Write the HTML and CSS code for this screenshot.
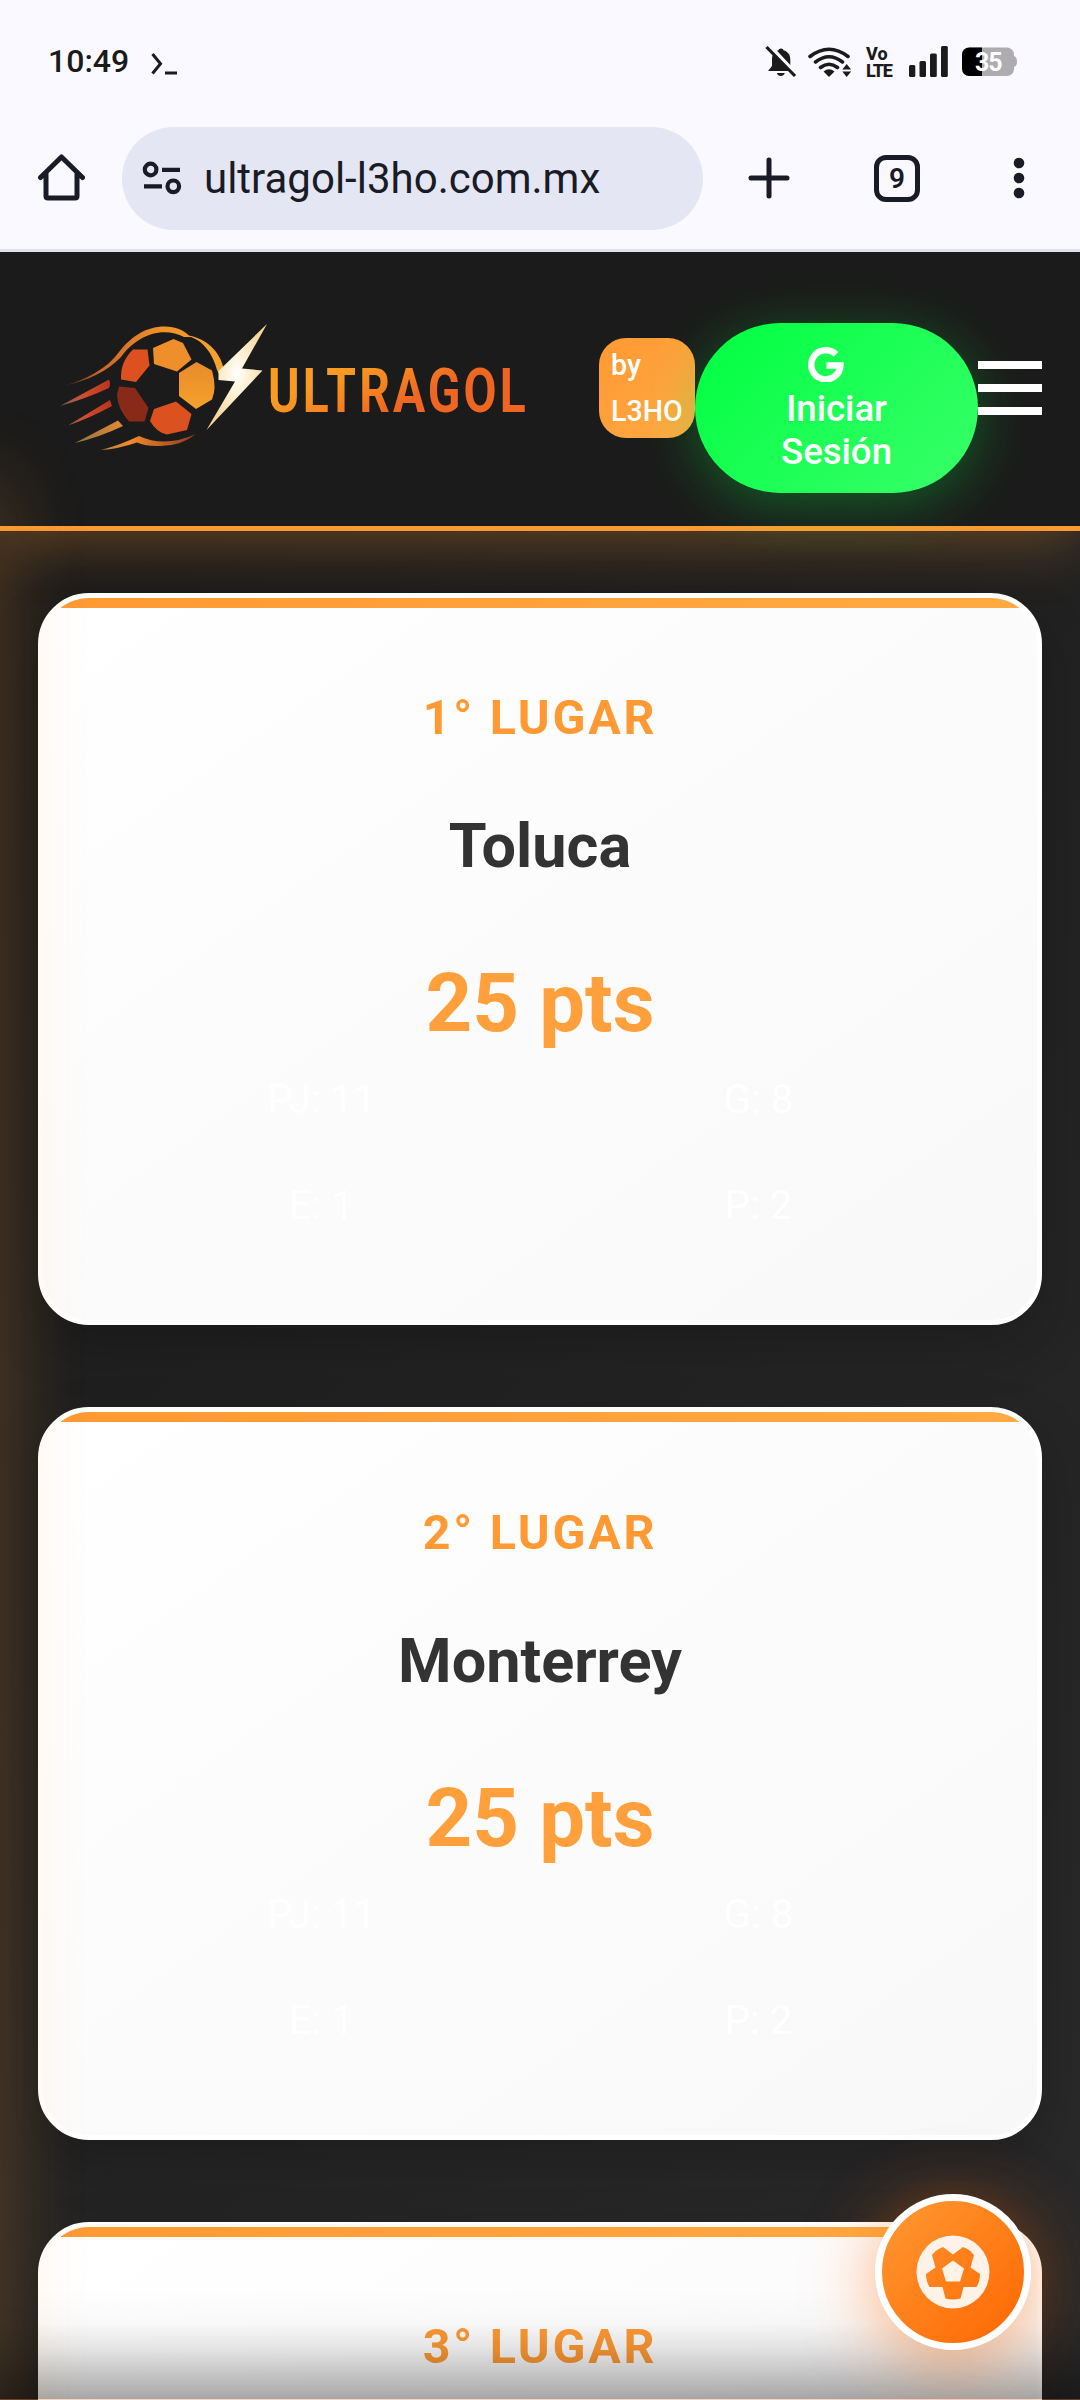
FILE: index.html
```html
<!DOCTYPE html>
<html lang="es">
<head>
<meta charset="utf-8">
<title>ULTRAGOL</title>
<link rel="stylesheet" href="styles.css">
</head>
<body>
<div class="screen">
  <div class="statusbar">
    <span class="clock">10:49</span>
    <svg class="prompt" width="26" height="22" viewBox="0 0 26 22" fill="none" stroke="#1b1b1b" stroke-width="3"><path d="M1.500 1 L9.500 10.700 L1.500 20.500 M14 20 H26"/></svg>
    <svg class="status-icons" width="254" height="38" viewBox="764 42 254 38">
      <g fill="#1b1b1b">
        <path d="M781 48.500c1.500 0 2.300.8 2.500 1.800 4.300 1.100 6.800 4.700 6.800 9.200v6.500l4 5H768l4-5v-6.500c0-4.500 2.300-8.100 6.500-9.200.2-1 1-1.800 2.500-1.800zM776.800 73h8c-.7 2-2 3-4 3s-3.300-1-4-3z"/>
        <path d="M769 45 797 75" stroke="#f9f9ff" stroke-width="4"/>
        <path d="M766.500 47 795 76" stroke="#1b1b1b" stroke-width="3.200"/>
        <path d="M829 77l-5.500-5.500q5.500-4.500 11 0z"/>
        <path d="M846.700 64l4.400 5.500h-8.800zM846.700 77l4.400-5.500h-8.800z"/>
        <rect x="909" y="65" width="6.300" height="12" rx="1.500"/><rect x="919.500" y="61" width="6.500" height="16" rx="1.500"/><rect x="930" y="53.500" width="6.800" height="23.500" rx="1.500"/><rect x="941" y="46" width="6.800" height="31" rx="1.500"/>
      </g>
      <g fill="none" stroke="#1b1b1b" stroke-width="3.600" stroke-linecap="round">
        <path d="M810 56.500q19-14.500 38 0M815.500 62q13.500-10.500 27 0M820.500 67.500q8.500-6.500 17 0"/>
      </g>
      <text class="volte" x="866" y="60">Vo</text>
      <text class="volte lte" x="866" y="77">LTE</text>
      <path d="M969 47.500h38a7 7 0 0 1 7 7v1.500q3 1 3 5.500t-3 5.500v2a7 7 0 0 1-7 7h-38z" fill="#aeacb1"/>
      <path d="M982 47.500h-13a7 7 0 0 0-7 7v14.500a7 7 0 0 0 7 7h13z" fill="#000"/>
      <text class="battery" x="975" y="71">35</text>
    </svg>
  </div>

  <div class="toolbar">
    <svg class="home" width="48" height="50" viewBox="37 154 48 50" fill="none" stroke="#191b26" stroke-width="5" stroke-linecap="round" stroke-linejoin="round"><path d="M40.500 178.500 61.500 158 82.500 178.500M46 174v23q0 2 2 2h27q2 0 2-2v-23"/></svg>
    <div class="urlbar">
      <svg width="40" height="34" viewBox="0 0 40 34" fill="none" stroke="#191b26" stroke-width="4.200"><circle cx="8.600" cy="8.500" r="5.800"/><path d="M20 8.800h18M2 25.300h18"/><circle cx="31.300" cy="25.300" r="5.800"/></svg>
      <span class="url">ultragol-l3ho.com.mx</span>
    </div>
    <svg class="plus" width="42" height="42" viewBox="0 0 42 42" stroke="#191b26" stroke-width="5" stroke-linecap="round"><path d="M21 3v36M3 21h36"/></svg>
    <span class="tabs">9</span>
    <svg class="dots" width="12" height="42" viewBox="0 0 12 42" fill="#191b26"><circle cx="6" cy="6" r="5.300"/><circle cx="6" cy="21" r="5.300"/><circle cx="6" cy="36" r="5.300"/></svg>
  </div>

  <div class="page">
    <header class="header">
      <svg class="logo" width="470" height="136" viewBox="60 320 470 136">
        <defs>
          <linearGradient id="swoosh" x1="0" x2="1"><stop offset="0" stop-color="#b5502a" stop-opacity=".4"/><stop offset=".2" stop-color="#c9622a"/><stop offset=".6" stop-color="#f0902a"/><stop offset="1" stop-color="#f4a52e"/></linearGradient>
          <linearGradient id="tail" x1="0" x2="1"><stop offset="0" stop-color="#e0a85a" stop-opacity=".6"/><stop offset=".45" stop-color="#f28a2a"/><stop offset="1" stop-color="#8f3a1c"/></linearGradient>
          <linearGradient id="word" gradientUnits="userSpaceOnUse" x1="120" y1="-50" x2="140" y2="5"><stop offset="0" stop-color="#f79b22"/><stop offset=".5" stop-color="#f58520"/><stop offset="1" stop-color="#ef6522"/></linearGradient>
          <radialGradient id="bolt" cx=".5" cy=".47" r=".5"><stop offset="0" stop-color="#fff"/><stop offset=".4" stop-color="#fdf1d4"/><stop offset="1" stop-color="#f5d8a0"/></radialGradient>
          <linearGradient id="streak" x1="0" x2="1"><stop offset="0" stop-color="#e6907a" stop-opacity=".5"/><stop offset=".5" stop-color="#d44a28"/><stop offset="1" stop-color="#b53420"/></linearGradient>
          <linearGradient id="panel" x1="0" y1="0" x2="0" y2="1"><stop offset="0" stop-color="#e98a2b"/><stop offset="1" stop-color="#f5a22c"/></linearGradient>
        </defs>
        <path fill="url(#swoosh)" d="M65 385.500C85 380 107 369 119 352C131 337 145 326.500 165 326.500C176 326.500 183 330 189 335.500C207 339 220 352 223.500 368L221 378L217 370C213 354 203 341 191 337L184 337C175 332 163 331 152 334C139 338 129 346 121 357C108 371 87 381 65 385.500Z"/>
        <path fill="url(#streak)" d="M60 406 109 379.500Q111 384 109 388Q85 399 60 406ZM68 425.500 110 400 112 406Q90 418 68 425.500Z"/>
        <path fill="url(#tail)" d="M75 443 118 420.500 123 426Q100 437 75 443ZM101 450Q120 445 139 436Q165 448 196 434Q180 447 157 446Q145 446 137 442.500Q118 449 101 450Z"/>
        <path fill="#dd5120" d="M133 349.500H147.500L149.500 365.500 136 382 121 379.500Q120 362 133 349.500Z"/>
        <path fill="#ef8f2b" d="M153 348 173.500 339 183 343 191.500 359.500 177 371.500 154 364Z"/>
        <path fill="url(#panel)" d="M196.500 362 212 370.500Q217 388 212 399.500L196 409 179 396V373Z"/>
        <path fill="#892a19" d="M119 386.500 135 388 148.500 408 144.500 421.500H129Q117 408 117 394Z"/>
        <path fill="#db5120" d="M154 409 176 401.500 191.500 414 187 430 167 434.500Q157 433 150 421Z"/>
        <path fill="url(#bolt)" d="M267 324 242 368.500 262.500 370.500 206.500 430 235 381.500 218.500 380 218.500 371Z"/>
        <text class="wordmark" transform="translate(268 411.500) scale(.773 1)" fill="url(#word)">ULTRAGOL</text>
      </svg>
      <div class="badge">by<br>L3HO</div>
      <button class="login">
        <svg width="36" height="36" viewBox="0 0 36 36"><path d="M28 8.300A14.600 14.600 0 1 0 32.400 19.500H18.500" fill="none" stroke="#fff" stroke-width="6.500"/></svg>
        <span>Iniciar<br>Sesión</span>
      </button>
      <div class="burger"><i></i><i></i><i></i></div>
    </header>
    <main class="cards">
      <section class="card"><h3>1° LUGAR</h3><h2>Toluca</h2><p class="pts">25 pts</p>
        <div class="stats"><span>PJ: 11</span><span>G: 8</span><span>E: 1</span><span>P: 2</span></div></section>
      <section class="card"><h3>2° LUGAR</h3><h2>Monterrey</h2><p class="pts">25 pts</p>
        <div class="stats"><span>PJ: 11</span><span>G: 8</span><span>E: 1</span><span>P: 2</span></div></section>
      <section class="card"><h3>3° LUGAR</h3></section>
    </main>
    <div class="edge-glow"></div>
    <div class="bottom-fade"></div>
    <div class="fab"><svg width="74" height="74" viewBox="0 0 74 74"><path fill="#fff" fill-opacity=".9" fill-rule="evenodd" d="M37 .500a36.500 36.500 0 1 1 0 73a36.500 36.500 0 0 1 0-73ZM37 19.500 27 12Q20 14.500 16 20L19.500 32.500 10 39Q10 46 13.500 52H26.500L29.500 63.500Q37 65.500 44.500 63.500L47.500 52H60.500Q64 46 64 39L54.500 32.500 58 20Q54 14.500 47 12ZM37 25.500 48 33.500 44 46.500H30L26 33.500Z"/></svg></div>
  </div>
</div>
</body>
</html>
```
FILE: styles.css
```css
* { box-sizing: border-box; }
body { margin: 0; font-family: Roboto, sans-serif; }
h2, h3, p { margin: 0; }
.screen { width: 1080px; height: 2400px; overflow: hidden; display: flex; flex-direction: column; background: #f9f9ff; }

.statusbar { height: 122px; flex: none; display: flex; align-items: center; padding: 0 62px 0 48px; }
.clock { font-size: 32px; font-weight: 500; color: #1b1b1b; }
.prompt { margin-left: 22px; margin-top: 5px; }
.status-icons { margin-left: auto; }
.volte { font: 800 18px Roboto, sans-serif; fill: #1b1b1b; }
.lte { letter-spacing: -1.2px; }
.battery { font: 700 25px Roboto, sans-serif; fill: #fff; letter-spacing: -1px; }
.wordmark { font: 700 62px Roboto, sans-serif; letter-spacing: 4px; }

.toolbar { height: 130px; flex: none; display: flex; align-items: center; padding: 0 55px 15px 37px; border-bottom: 3px solid #dfe2ee; }
.urlbar { width: 581px; height: 103px; margin-left: 37px; border-radius: 52px; background: #e4e6f3; display: flex; align-items: center; padding-left: 20px; }
.url { margin-left: 22px; font-size: 42px; color: #191b26; }
.plus { margin-left: 45px; }
.tabs { width: 46px; height: 47px; margin-left: 84px; border: 5px solid #191b26; border-radius: 12px; display: flex; align-items: center; justify-content: center; font-size: 28px; font-weight: 600; color: #191b26; }
.dots { margin-left: auto; }

.page { flex: 1; min-height: 0; position: relative; background: linear-gradient(135deg, #1a1a1a, #2a2a2a); overflow: hidden; }
.header { height: 279px; display: flex; align-items: flex-start; padding: 0 38px 0 60px; background: #1b1b1b; border-bottom: 5px solid #ff9933; box-shadow: 0 11px 55px rgba(255, 153, 51, .3); }
.logo { flex: none; margin-top: 68px; }
.badge { flex: none; margin: 86px 0 0 69px; width: 96px; height: 100px; border-radius: 27px; padding: 4px 0 0 12px; background: linear-gradient(135deg, #ff9933, #ffaa44); color: #fff; font-size: 28.6px; font-weight: 500; line-height: 46px; }
.login { flex: none; margin-top: 71px; width: 283px; height: 170px; border: 0; border-radius: 85px; padding: 0; display: flex; flex-direction: column; align-items: center; background: linear-gradient(135deg, #00ff41, #39ff6a); box-shadow: 0 11px 55px rgba(0, 255, 65, .3); color: #fff; font: 500 36.6px/43px Roboto, sans-serif; }
.login svg { flex: none; margin: 23px 21px 5px 0; }
.burger { display: flex; flex-direction: column; gap: 15px; margin-top: 109px; }
.burger i { width: 64px; height: 8px; background: #fff; }

.cards { padding: 62px 38px 0; display: flex; flex-direction: column; gap: 82px; }
.card { height: 732.300px; flex: none; position: relative; overflow: hidden; border: 5px solid #fff; border-radius: 51px; background: linear-gradient(145deg, #fff, #f8f8f8); text-align: center; padding-top: 92.400px; box-shadow: 0 22px 55px rgba(0, 0, 0, .2); }
.card::before { content: ""; position: absolute; left: 0; right: 0; top: 0; height: 10px; background: linear-gradient(90deg, #ff9933, #ffaa44); }
.card h3 { font-size: 48.400px; line-height: 56px; font-weight: 700; letter-spacing: 2.75px; color: #ff9933; }
.card h2 { margin-top: 64px; font-size: 61.200px; line-height: 72px; font-weight: 700; color: #333; }
.pts { margin-top: 73px; font-size: 81.500px; line-height: 96px; font-weight: 700; color: #ffa03c; }
.stats { margin: 25px auto 0; width: 832px; display: grid; grid-template-columns: 1fr 1fr; column-gap: 42px; row-gap: 58px; font-size: 40.400px; line-height: 48px; color: #fff; }

.edge-glow { position: absolute; left: -60px; top: 230px; width: 60px; bottom: -80px; box-shadow: 0 0 82px rgba(255, 153, 51, .3); }
.fab { position: absolute; left: 875px; top: 1942px; width: 156px; height: 156px; border: 7px solid #fff; border-radius: 50%; background: linear-gradient(135deg, #ff9933, #ff6600); box-shadow: 0 11px 69px rgba(255, 102, 0, .5); display: flex; align-items: center; justify-content: center; }
.bottom-fade { position: absolute; left: 0; right: 0; bottom: 0; height: 110px; border-bottom: 1px solid rgba(255, 102, 51, .3); background: linear-gradient(rgba(0, 0, 0, 0), rgba(0, 0, 0, .02) 30%, rgba(0, 0, 0, .1) 54%, rgba(0, 0, 0, .21) 75%, rgba(0, 0, 0, .34)); }
```
